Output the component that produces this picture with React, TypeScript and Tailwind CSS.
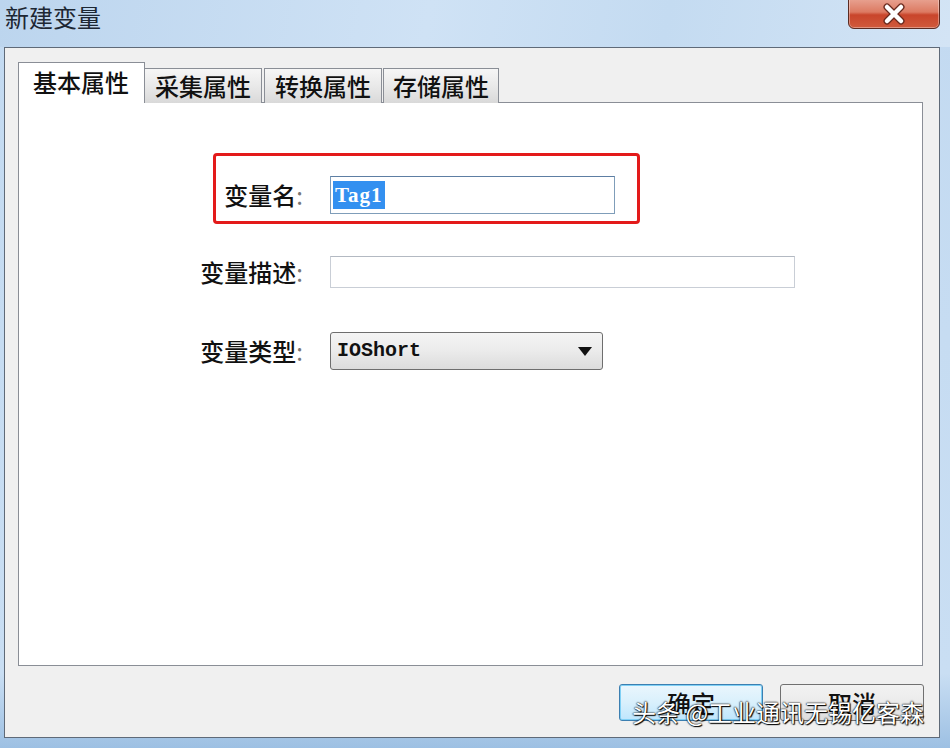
import React from 'react';

const cjk = '[font-family:"Noto_Sans_CJK_SC","Noto_Sans",sans-serif]';

const tabs = ['采集属性', '转换属性', '存储属性'];

const Row = ({ label, children, className }: { label: string; children: React.ReactNode; className: string }) => (
  <div className={`flex items-center ${className}`}>
    <div className={`ml-[163px] w-[121px] text-right text-[24px] font-medium leading-none text-[#111] ${cjk}`}>
      {label}
      <span className="font-normal text-[#777]">:</span>
    </div>
    <div className="ml-[27px]">{children}</div>
  </div>
);

const App = () => {
  return (
    <div className="relative flex h-[748px] w-[950px] flex-col overflow-hidden bg-[linear-gradient(180deg,#c3daf1_0%,#c9def3_90%,#9dc0e3_100%)]">
      {/* title bar */}
      <div className="flex h-[47px] items-start justify-between bg-[linear-gradient(100deg,#bcd5ee_0%,#cfe2f5_45%,#c4dbf1_70%,#d3e4f5_100%)]">
        <span className={`pl-[5px] pt-[2px] text-[24px] leading-[30px] text-[#1d2733] ${cjk}`}>新建变量</span>
        <div className="mr-[10px] -mt-[2px] flex h-[31px] w-[92px] items-center justify-center rounded-b-[6px] border border-[#5a2b22] bg-[linear-gradient(180deg,#e8a291_0%,#dc7a62_45%,#c9452b_55%,#d05a3c_100%)] shadow-[inset_0_0_0_1px_rgba(255,255,255,0.35)]">
          <svg width="26" height="22" viewBox="0 0 26 22">
            <path d="M6 4 L20 18 M20 4 L6 18" stroke="#6a2a1e" strokeWidth="7" strokeLinecap="round" />
            <path d="M6 4 L20 18 M20 4 L6 18" stroke="#ffffff" strokeWidth="4.5" strokeLinecap="round" />
          </svg>
        </div>
      </div>

      {/* client area */}
      <div className="ml-[4px] mr-[10px] flex h-[691px] flex-col border border-[#5f6a78] bg-[#f0f0f0] pl-[13px] pt-[14px]">
        <div className="relative z-10 flex h-[41px] items-end">
          <div className={`flex h-[41px] w-[127px] items-start border border-b-0 border-[#8a8e96] bg-white pl-[14px] pt-[4px] text-[24px] font-medium leading-[30px] text-[#111] ${cjk}`}>
            基本属性
          </div>
          {tabs.map((t, i) => (
            <div
              key={t}
              className={`flex h-[35px] items-center justify-center border border-b-0 border-[#8a8e96] bg-[linear-gradient(180deg,#f6f6f6_0%,#e9e9e9_50%,#d9d9d9_100%)] text-[24px] font-medium leading-none text-[#111] ${cjk} ${i === 0 ? 'w-[117px] border-l-0' : i === 1 ? 'ml-[2px] w-[118px]' : 'ml-[1px] w-[116px]'}`}
            >
              {t}
            </div>
          ))}
        </div>

        <div className="relative -mt-[1px] h-[564px] w-[905px] border border-[#8a8e96] bg-white">
          <Row label="变量名" className="mt-[73px]">
            <div className="flex h-[38px] w-[285px] items-center border border-[#7f9db9] border-t-[#5d7ea3] bg-white pl-[2px]">
              <span className="bg-[#3390f0] px-[2px] text-[21px] font-bold leading-[28px] tracking-[1px] text-white [font-family:'Liberation_Serif',serif]">
                Tag1
              </span>
            </div>
          </Row>
          <Row label="变量描述" className="mt-[42px]">
            <div className="h-[32px] w-[465px] border border-[#c9ced6] border-t-[#b3b9c2] bg-white" />
          </Row>
          <Row label="变量类型" className="mt-[44px]">
            <div className="flex h-[38px] w-[273px] items-center justify-between rounded-[3px] border border-[#6e6e6e] bg-[linear-gradient(180deg,#f4f4f4_0%,#ebebeb_50%,#dcdcdc_100%)] pl-[6px] pr-[10px]">
              <span className="text-[20px] font-bold text-[#111] [font-family:'Liberation_Mono',monospace]">IOShort</span>
              <svg width="14" height="9" viewBox="0 0 14 9">
                <path d="M0 0 H14 L7 9 Z" fill="#111" />
              </svg>
            </div>
          </Row>

          {/* annotation */}
          <div className="absolute left-[194px] top-[50px] h-[71px] w-[427px] rounded-[4px] border-[3px] border-[#e31a1a]" />
        </div>

        <div className="mt-[18px] flex w-[906px] justify-end gap-[17px]">
          <div className={`flex h-[37px] w-[144px] items-center justify-center rounded-[3px] border border-[#3c7fb1] bg-[linear-gradient(180deg,#eaf6fd_0%,#d9f0fc_50%,#bee6fd_100%)] shadow-[inset_0_0_0_1px_#7fd0f5] text-[24px] font-medium text-[#111] ${cjk}`}>
            确定
          </div>
          <div className={`flex h-[37px] w-[144px] items-center justify-center rounded-[3px] border border-[#707070] bg-[linear-gradient(180deg,#f2f2f2_0%,#ebebeb_50%,#dddddd_100%)] text-[24px] font-medium text-[#111] ${cjk}`}>
            取消
          </div>
        </div>
      </div>

      {/* watermark */}
      <div className={`absolute left-[632px] top-[696px] text-[24px] leading-[32px] text-white [text-shadow:0_0_2px_#000,0_0_1px_#000,1px_1px_1px_#000] ${cjk}`}>
        头条 @工业通讯无锡亿客森
      </div>
    </div>
  );
};

export default App;
